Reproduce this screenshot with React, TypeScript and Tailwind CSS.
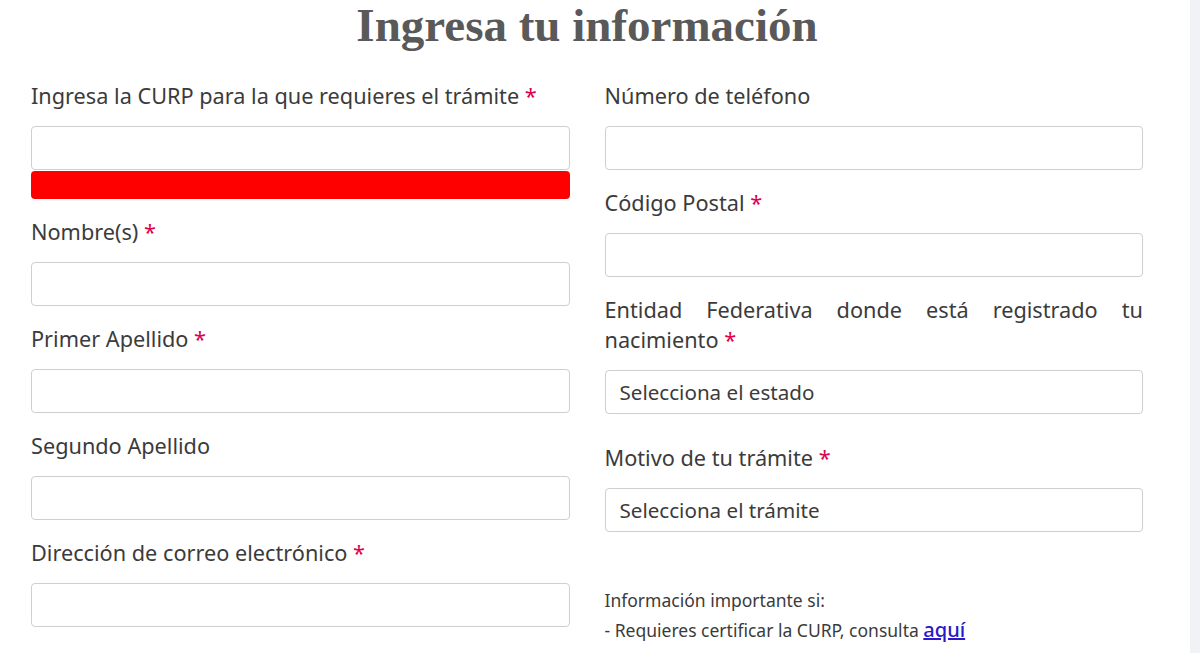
import React from 'react';

const Req = () => <span className="text-[#e0004d]"> *</span>;

const Field: React.FC<{ label: React.ReactNode; select?: string; justify?: boolean; extra?: string }> = ({
  label,
  select,
  justify,
  extra = '',
}) => (
  <div className={`flex flex-col ${extra}`}>
    <label className={`text-[21.7px] leading-[30px] text-[#3b3b3b] ${justify ? 'text-justify' : ''}`}>{label}</label>
    <div className="mt-[15px] h-[44px] rounded-[4px] border border-[#cfcfcf] bg-white px-[14px] flex items-center text-[20.6px] text-[#3b3b3b]">
      {select}
    </div>
  </div>
);

export default function App() {
  return (
    <div className="flex min-h-[653px] w-[1200px] bg-white font-['Noto_Sans',sans-serif] overflow-hidden">
      <div className="w-[1190px] pl-[31px] pt-[2px]">
        <div className="w-[1112px]">
          <h1 className="text-center font-['Liberation_Serif',serif] font-bold text-[47px] leading-[46px] text-[#595959]">
            Ingresa tu información
          </h1>

          <div className="mt-[33px] grid grid-cols-2 gap-x-[35px]">
            {/* Left column */}
            <div className="flex flex-col gap-[18px]">
              <div className="flex flex-col">
                <Field label={<>Ingresa la CURP para la que requieres el trámite<Req /></>} />
                <div className="mt-px h-[28px] rounded-[4px] bg-[#ff0000]" />
              </div>
              <Field label={<>Nombre(s)<Req /></>} />
              <Field label={<>Primer Apellido<Req /></>} />
              <Field label="Segundo Apellido" />
              <Field label={<>Dirección de correo electrónico<Req /></>} />
            </div>

            {/* Right column */}
            <div className="flex flex-col gap-[18px]">
              <Field label="Número de teléfono" />
              <Field label={<>Código Postal<Req /></>} />
              <Field justify label={<>Entidad Federativa donde está registrado tu nacimiento<Req /></>} select="Selecciona el estado" />
              <Field extra="mt-[11px]" label={<>Motivo de tu trámite<Req /></>} select="Selecciona el trámite" />
              <div className="mt-[36px] text-[17.5px] leading-[29px] text-[#3b3b3b]">
                <p>Información importante si:</p>
                <p>
                  - Requieres certificar la CURP, consulta{' '}
                  <a href="#" className="text-[20px] font-medium text-[#2a18c9] underline">aquí</a>
                </p>
              </div>
            </div>
          </div>
        </div>
      </div>
      <div className="w-[10px] bg-[#f0f2f6]" />
    </div>
  );
}
